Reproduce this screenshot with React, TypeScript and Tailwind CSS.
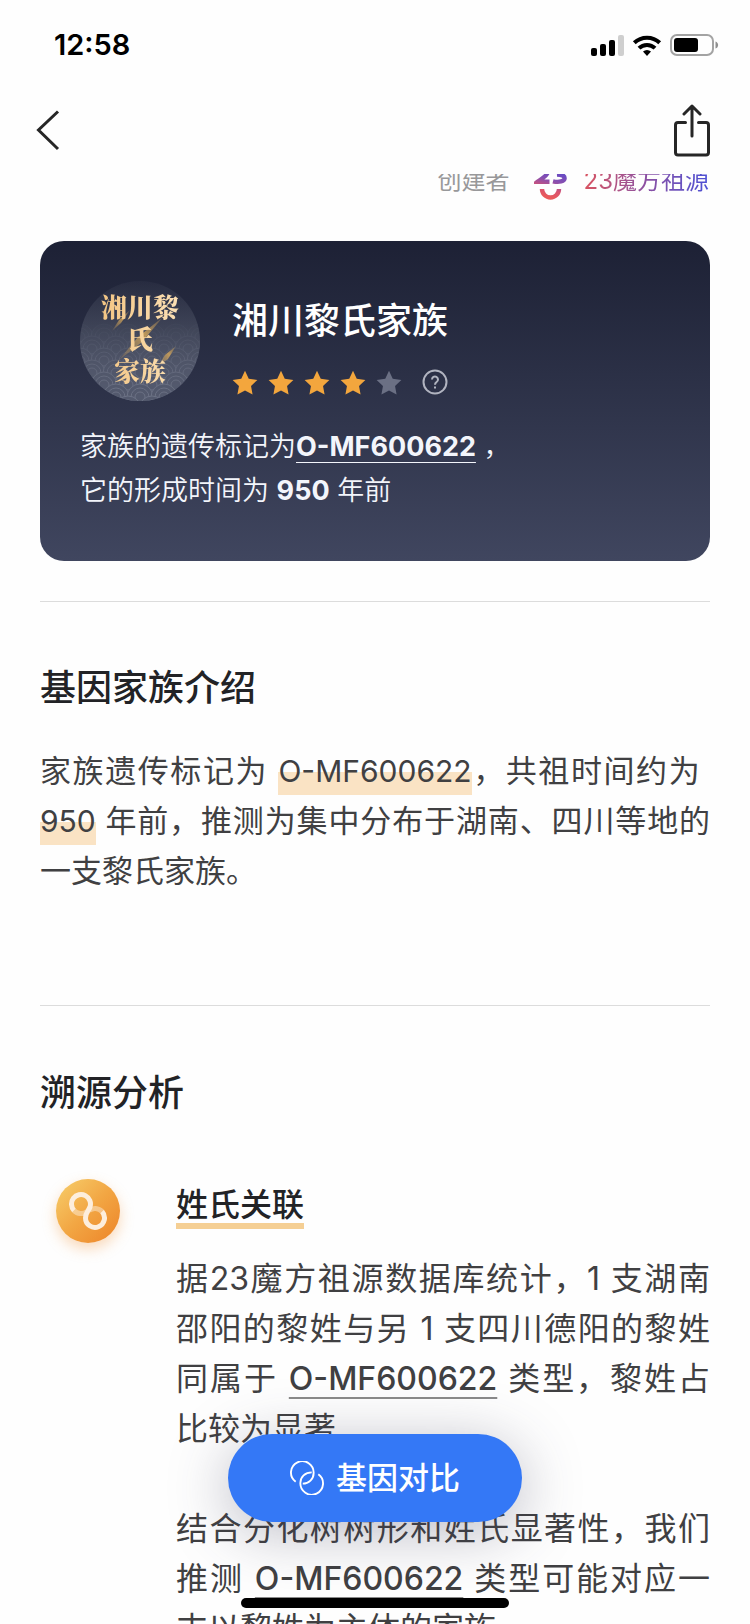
import type { ReactNode } from "react";

const family = {
  name: "湘川黎氏家族",
  marker: "O-MF600622",
  years: 950,
  stars: 4,
};

const STAR_PATH =
  "M12.5 0.8l3.6 7.6 8.3 1.1-6.1 5.8 1.5 8.3-7.3-4-7.3 4 1.5-8.3-6.1-5.8 8.3-1.1z";

function StatusIcons() {
  return (
    <svg width="130" height="24" viewBox="0 0 130 24" aria-hidden="true">
      {/* Signal */}
      <rect x="1" y="15" width="6" height="8" rx="2" />
      <rect x="10" y="11" width="6" height="12" rx="2" />
      <rect x="19" y="7" width="6" height="16" rx="2" />
      <rect x="28" y="2" width="6" height="21" rx="2" fill="#cfcfcf" />
      {/* Wifi */}
      <g fill="none" stroke="#000" strokeWidth="4">
        <path d="M44.3 9.8a18.2 18.2 0 0 1 25.4 0" />
        <path d="M49 15.2a11.4 11.4 0 0 1 16 0" />
      </g>
      <path d="M53 18.6a6 6 0 0 1 8 0l-4 4.4z" />
      {/* Battery */}
      <rect x="81" y="2" width="42" height="20" rx="6" fill="none" stroke="#a3a3a3" strokeWidth="2" />
      <rect x="84" y="5" width="24" height="14" rx="3" />
      <path d="M125.5 8.5c3.5 1 3.5 6 0 7z" fill="#8f8f8f" />
    </svg>
  );
}

function BrandLogo() {
  return (
    <svg width="34" height="38" viewBox="0 0 34 38" aria-hidden="true">
      <defs>
        <linearGradient id="brand" gradientUnits="userSpaceOnUse" x1="24" y1="6" x2="16" y2="36">
          <stop offset="0" stopColor="#5549cf" />
          <stop offset="0.45" stopColor="#8a4fae" />
          <stop offset="0.75" stopColor="#d9536f" />
          <stop offset="1" stopColor="#ea5a5a" />
        </linearGradient>
      </defs>
      <g fill="none" stroke="url(#brand)" strokeWidth="4.4">
        <path d="M2.5 8a6 5 0 0 1 11 2.5c0 3-5 5.5-10 9.3h12" />
        <path d="M19 6.5c5-2 9.5-0.5 9.5 2.5 0 2-2 3.3-5.5 3.5 4.5 0 7.6 1.5 7.6 3.8 0 3-5.6 4.5-11.6 3" />
        <path d="M8 27a8.500 8.500 0 0 0 17 0" />
      </g>
    </svg>
  );
}

// Coin with overlapping scale waves and golden slashes
function Emblem() {
  const rows = [0, 1, 2, 3, 4, 5, 6];
  const cols = [0, 1, 2, 3, 4, 5, 6];
  return (
    <svg className="absolute inset-0" viewBox="0 0 120 120" aria-hidden="true">
      <defs>
        <linearGradient id="coin" x1="0" y1="0" x2="0" y2="1">
          <stop offset="0" stopColor="#5b6172" stopOpacity="0.1" />
          <stop offset="0.5" stopColor="#5b6172" stopOpacity="0.55" />
          <stop offset="1" stopColor="#666c80" />
        </linearGradient>
        <linearGradient id="fade" x1="0" y1="0" x2="0" y2="1">
          <stop offset="0.3" stopColor="#000" />
          <stop offset="1" stopColor="#ccc" />
        </linearGradient>
        <linearGradient id="slash" x1="1" y1="0" x2="0" y2="1">
          <stop offset="0" stopColor="#d9a95a" stopOpacity="0.15" />
          <stop offset="0.4" stopColor="#d9a95a" stopOpacity="0.8" />
          <stop offset="1" stopColor="#d9a95a" stopOpacity="0.1" />
        </linearGradient>
        <mask id="waveMask">
          <rect width="120" height="120" fill="url(#fade)" />
        </mask>
        <clipPath id="coinClip">
          <circle cx="60" cy="60" r="60" />
        </clipPath>
      </defs>
      <circle cx="60" cy="60" r="60" fill="url(#coin)" />
      <g clipPath="url(#coinClip)" mask="url(#waveMask)">
        {rows.map((row) =>
          cols.map((col) => {
            const cx = col * 24 + (row % 2 ? -12 : 0);
            const cy = 56 + row * 12;
            return (
              <g key={`${row}-${col}`} fill="#4e5468" stroke="#6f7588" strokeWidth="1">
                <circle cx={cx} cy={cy} r="13" />
                <circle cx={cx} cy={cy} r="9" />
                <circle cx={cx} cy={cy} r="5" />
              </g>
            );
          })
        )}
      </g>
      <g fill="url(#slash)">
        <path d="M50 29L41 42 32 50l7-11z" />
        <path d="M83 36L62 61 38 80l20-24z" />
        <path d="M96 65L88 78l-10 7 7-11z" />
      </g>
    </svg>
  );
}

function SectionTitle({ children }: { children: ReactNode }) {
  return <h2 className="text-[36px] leading-[44px] font-medium text-[#222326]">{children}</h2>;
}

function Highlight({ children }: { children: ReactNode }) {
  return (
    <span className="bg-[linear-gradient(transparent_46%,#fae3c4_46%)] pb-1.5 text-[30px]">
      {children}
    </span>
  );
}

function MarkerLink() {
  return (
    <a
      href="#marker"
      className="font-medium underline decoration-[#8a8a8a] decoration-2 underline-offset-[7px]"
    >
      {family.marker}
    </a>
  );
}

export default function App() {
  return (
    <div className="relative flex h-screen flex-col overflow-hidden bg-[#fefefe] font-['Inter','Noto_Sans_CJK_SC',sans-serif] text-[#404042]">
      {/* Status bar */}
      <div className="flex h-[90px] shrink-0 items-center justify-between pr-[30px] pl-[54px] text-[29px] font-semibold text-black">
        <span>12:58</span>
        <StatusIcons />
      </div>

      {/* Nav */}
      <header className="flex h-[84px] shrink-0 items-center justify-between px-9 pb-0.5">
        <button type="button" aria-label="返回">
          <svg width="24" height="42" viewBox="0 0 24 42" fill="none" stroke="#262626" strokeWidth="3">
            <path d="M22 1.5L2.5 20 22 39" />
          </svg>
        </button>
        <button type="button" aria-label="分享">
          <svg
            width="44"
            height="54"
            viewBox="0 0 44 54"
            fill="none"
            stroke="#262626"
            strokeWidth="3"
            strokeLinecap="round"
            strokeLinejoin="round"
          >
            <path d="M15.5 18.5H8a2.5 2.5 0 0 0-2.5 2.5v27.5A2.5 2.5 0 0 0 8 51h28a2.5 2.5 0 0 0 2.5-2.5V21a2.5 2.5 0 0 0-2.5-2.5h-7.5" />
            <path d="M22 32V2M14 10l8-8 8 8" />
          </svg>
        </button>
      </header>

      <main className="flex-1 overflow-hidden px-10">
        {/* Creator */}
        <div className="-mt-[13px] flex h-10 items-center justify-end text-[24px]">
          <span className="mr-6 text-[#98989a]">创建者</span>
          <BrandLogo />
          <a
            href="#creator"
            className="ml-4 bg-linear-to-r from-[#d9525f] via-[#8a4fa3] to-[#4a4fd6] bg-clip-text pr-px text-transparent"
          >
            23魔方祖源
          </a>
        </div>

        {/* Family card */}
        <section className="mt-10 rounded-3xl bg-linear-to-b from-[#1d2135] to-[#40465f] px-10 pt-10 pb-12 text-white">
          <div className="flex">
            <div className="relative flex h-[120px] w-[120px] items-center justify-center rounded-full pb-1.5">
              <Emblem />
              <div className="relative bg-linear-to-r from-[#f3c583] to-[#fbe0b4] bg-clip-text text-center font-['Noto_Serif_CJK_SC','Noto_Sans_CJK_SC',serif] text-[26px] leading-8 font-black text-transparent">
                湘川黎
                <br />氏<br />
                家族
              </div>
            </div>
            <div className="ml-8 pt-4">
              <h1 className="text-[36px] leading-[48px] font-medium">{family.name}</h1>
              <div className="mt-6 flex items-center gap-2.5">
                {[1, 2, 3, 4, 5].map((n) => (
                  <svg key={n} width="26" height="25" viewBox="0 0 25 24" aria-hidden="true">
                    <path d={STAR_PATH} fill={n <= family.stars ? "#f3a63d" : "#6b7084"} />
                  </svg>
                ))}
                <button type="button" aria-label="说明" className="ml-2.5">
                  <svg width="26" height="26" viewBox="0 0 26 26" fill="none" stroke="#b1b4c0" strokeWidth="2">
                    <circle cx="13" cy="13" r="11.5" />
                    <path d="M10 10.5a3 3 0 1 1 4.6 2.5c-1 .7-1.6 1.2-1.6 2.8" />
                    <path d="M13 17.5v2" />
                  </svg>
                </button>
              </div>
            </div>
          </div>
          <p className="mt-6 text-[27px] leading-[44px] font-[350] text-[#f3f5fb]">
            家族的遗传标记为
            <a href="#marker" className="font-bold underline decoration-1 underline-offset-[6px]">
              {family.marker}
            </a>{" "}
            ，
            <br />
            它的形成时间为 <b className="font-bold">{family.years}</b> 年前
          </p>
        </section>

        <hr className="mt-10 border-[#dcdcdc]" />

        {/* Intro */}
        <section className="pt-16">
          <SectionTitle>基因家族介绍</SectionTitle>
          <p className="mt-9 text-justify text-[31px] leading-[50px]">
            家族遗传标记为 <Highlight>{family.marker}</Highlight>，共祖时间约为&nbsp;
            <wbr />
            <Highlight>{family.years}</Highlight>{" "}
            年前，推测为集中分布于湖南、四川等地的一支黎氏家族。
          </p>
        </section>

        <hr className="mt-[109px] border-[#dcdcdc]" />

        {/* Analysis */}
        <section className="pt-[65px]">
          <SectionTitle>溯源分析</SectionTitle>
          <div className="mt-16 flex gap-14 pl-4">
            <div className="flex h-16 w-16 shrink-0 items-center justify-center rounded-full bg-linear-to-br from-[#f6cf6b] via-[#f2a643] to-[#ec8327] shadow-[0_6px_14px_rgba(240,150,60,0.35)]">
              <svg width="40" height="40" viewBox="0 0 40 40" fill="none" strokeWidth="5" aria-hidden="true">
                <g stroke="#fff" strokeOpacity="0.4">
                  <path d="M6 19.5A9.5 9.5 0 0 0 19 20.5" />
                  <path d="M21 19.5A9.5 9.5 0 0 1 34 20.5" />
                </g>
                <path
                  d="M6 19.5A9.5 9.5 0 1 1 22 16C20.5 20 17.5 21.5 17.5 27A9.5 9.5 0 1 0 34 20.5"
                  stroke="#fdeedd"
                />
              </svg>
            </div>
            <div className="flex-1 pt-2">
              <h3 className="inline-block border-b-6 border-[#f5cf94] text-[32px] leading-9 font-medium text-[#222326]">
                姓氏关联
              </h3>
              <p className="mt-[25px] text-justify text-[32px] leading-[50px]">
                据23魔方祖源数据库统计，1 支湖南邵阳的黎姓与另 1 支四川德阳的黎姓同属于{" "}
                <MarkerLink /> 类型，黎姓占比较为显著
              </p>
              <p className="mt-[50px] text-justify text-[32px] leading-[50px]">
                结合分化树树形和姓氏显著性，我们推测 <MarkerLink />{" "}
                类型可能对应一支以黎姓为主体的家族
              </p>
            </div>
          </div>
        </section>
      </main>

      {/* Floating action */}
      <button
        type="button"
        className="absolute bottom-[102px] left-1/2 flex h-[88px] w-[294px] -translate-x-1/2 items-center justify-center gap-3 rounded-full bg-[#3478f6] text-[31px] font-medium text-white shadow-[0_10px_60px_rgba(60,60,90,0.35)]"
      >
        <svg width="34" height="34" viewBox="0 0 36 36" fill="none" stroke="#fff" strokeWidth="2" aria-hidden="true">
          <path d="M6 22A12 12 0 1 1 25 13c0 6-5 11-11.5 11" />
          <path d="M30 14A12 12 0 1 1 11 23C11 17 16 12 23 12" />
        </svg>
        基因对比
      </button>

      {/* Home indicator */}
      <div className="absolute bottom-4 left-1/2 h-2.5 w-[268px] -translate-x-1/2 rounded-full bg-black" />
    </div>
  );
}
